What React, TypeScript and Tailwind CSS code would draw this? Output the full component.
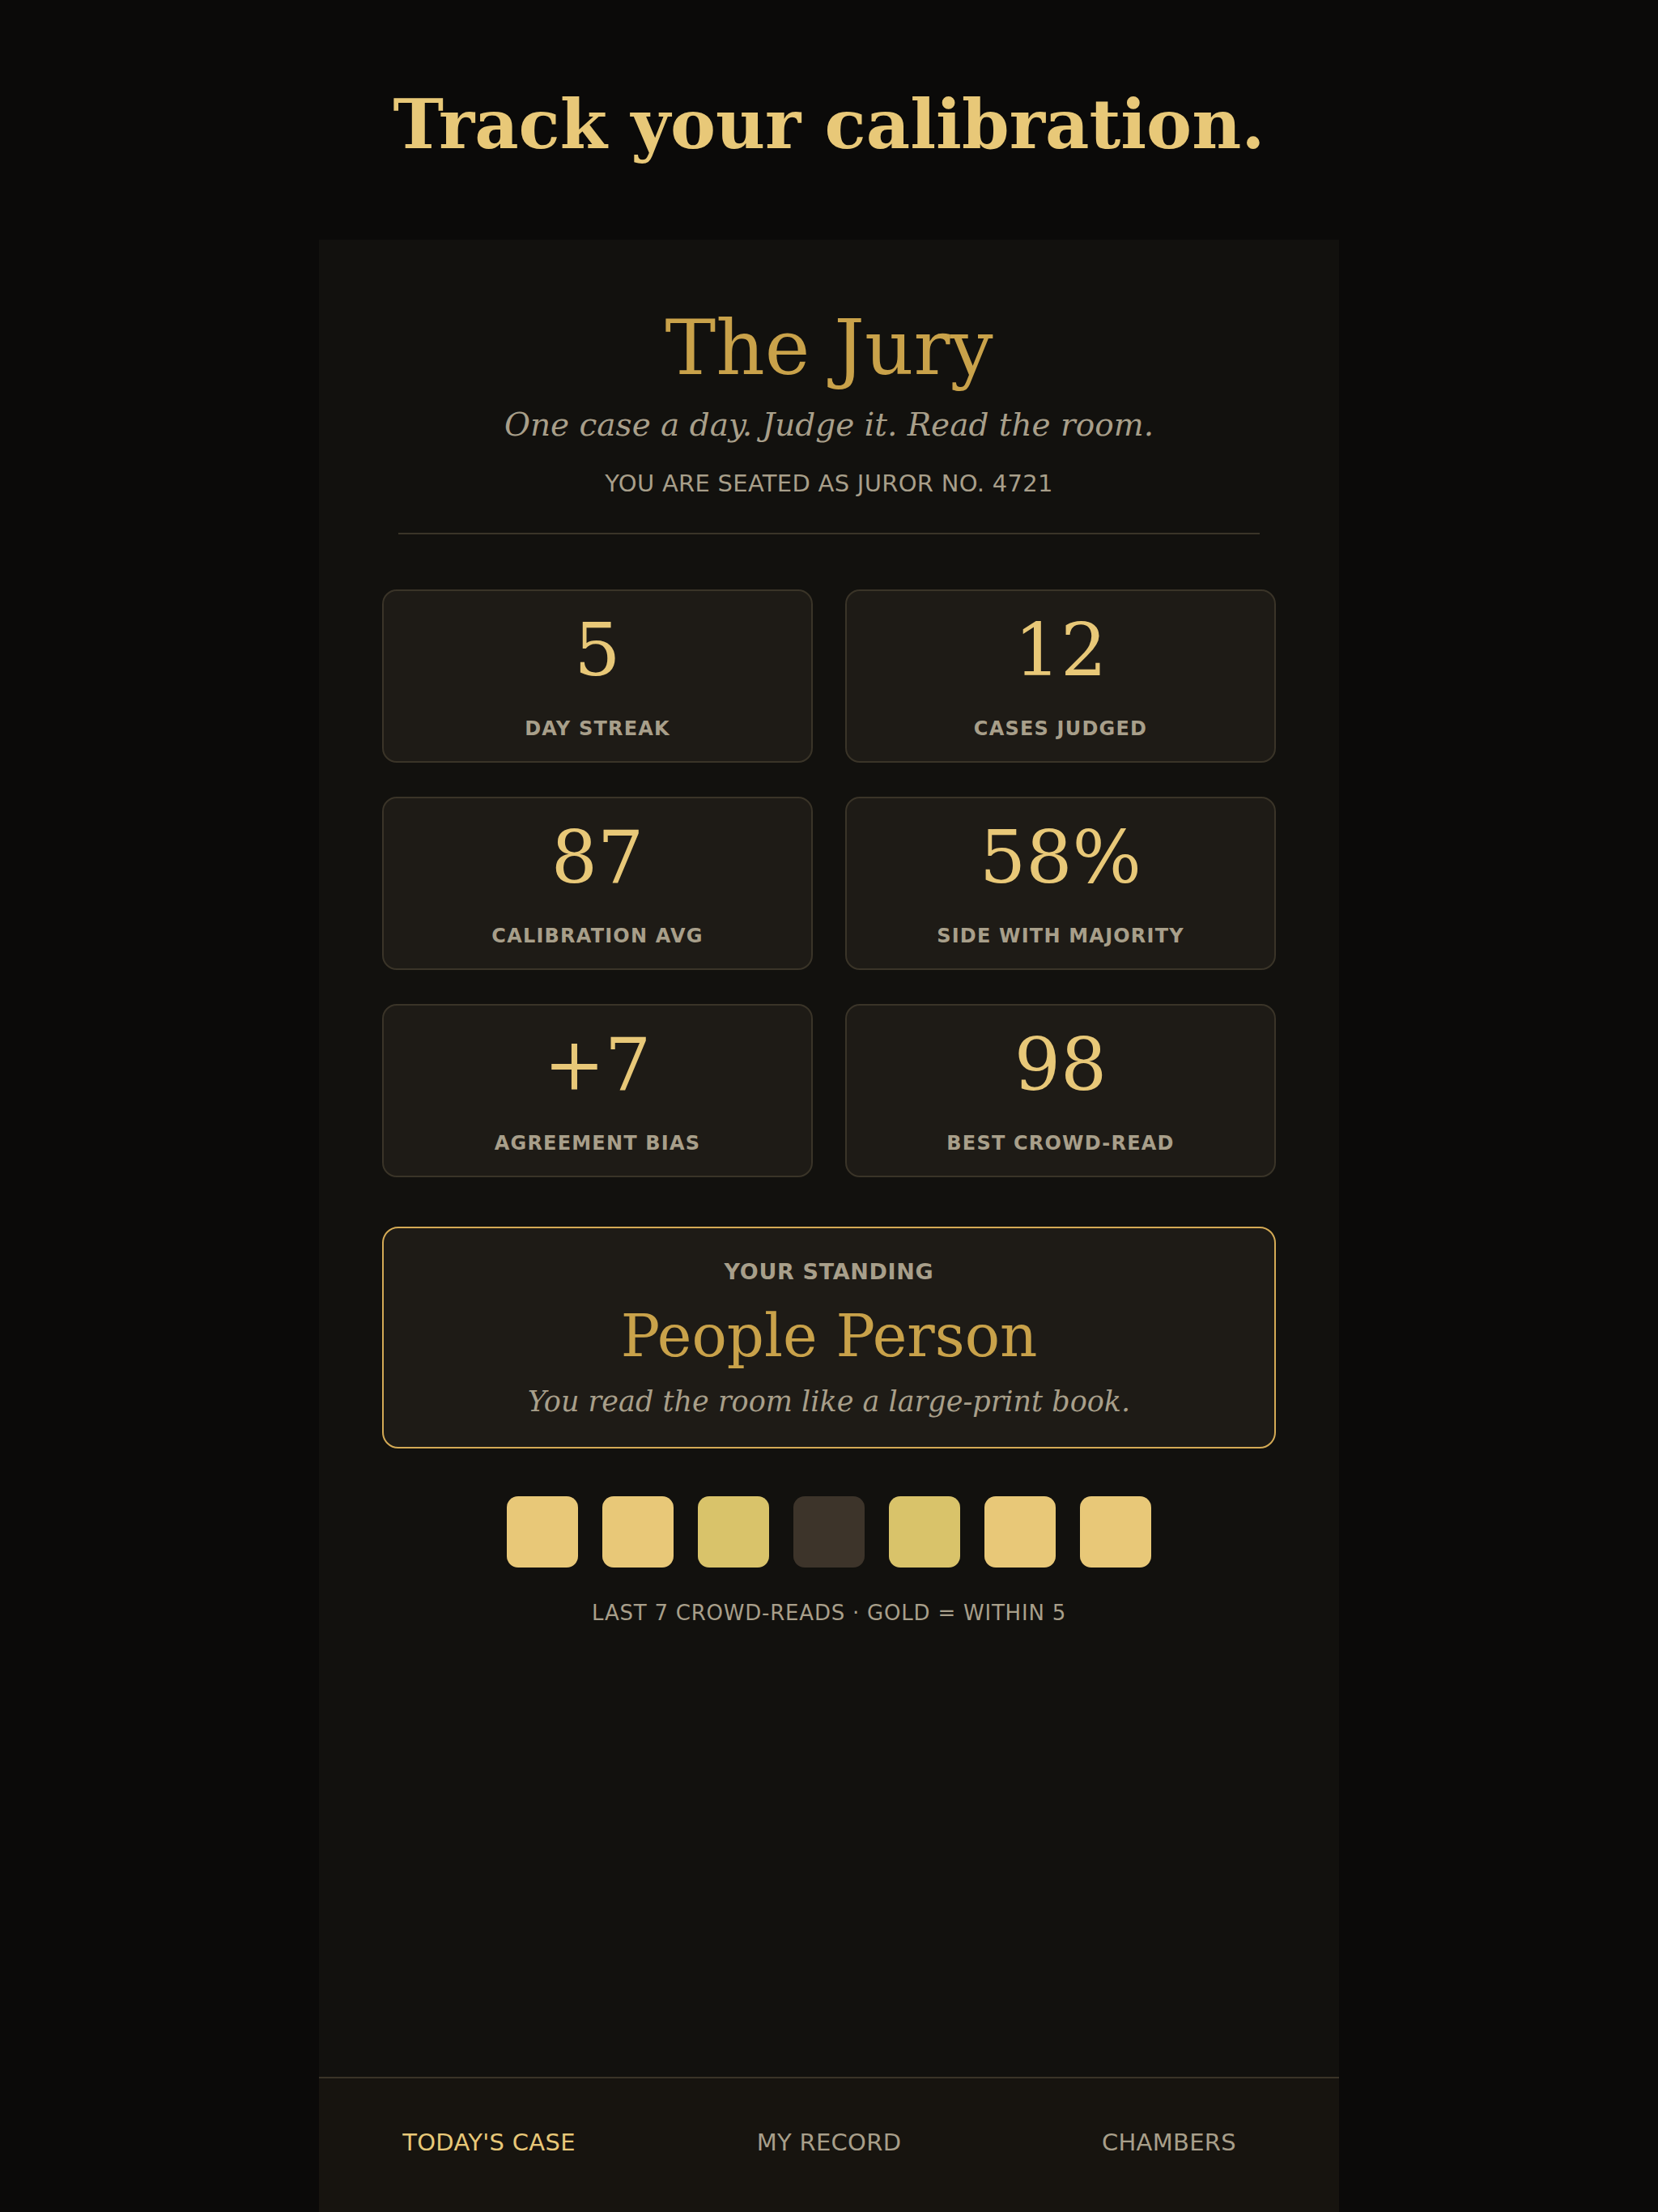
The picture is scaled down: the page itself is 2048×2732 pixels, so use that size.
import React from "react";

const serif = { fontFamily: '"DejaVu Serif", "Liberation Serif", serif' };

const stats = [
  { value: "5", label: "DAY STREAK" },
  { value: "12", label: "CASES JUDGED" },
  { value: "87", label: "CALIBRATION AVG" },
  { value: "58%", label: "SIDE WITH MAJORITY" },
  { value: "+7", label: "AGREEMENT BIAS" },
  { value: "98", label: "BEST CROWD-READ" },
];

const reads = ["#e8c878", "#e8c878", "#d9c36a", "#3d342a", "#d9c36a", "#e8c878", "#e8c878"];

export default function App() {
  return (
    <div className="min-h-screen bg-[#0b0a09] flex flex-col items-center font-['DejaVu_Sans','Liberation_Sans',sans-serif]">
      <h1
        className="pt-[112px] text-[84px] leading-none font-bold text-[#e8c878]"
        style={serif}
      >
        Track your calibration.
      </h1>

      <div className="mt-[100px] w-[1260px] h-[2436px] bg-[#12110e] flex flex-col">
        <div className="pt-[87px] flex flex-col items-center text-center">
          <div className="text-[94px] leading-none text-[#c9a24a]" style={serif}>
            The Jury
          </div>
          <div className="mt-[28px] text-[39px] leading-none italic text-[#a89f8a]" style={serif}>
            One case a day. Judge it. Read the room.
          </div>
          <div className="mt-[39px] text-[29px] leading-none text-[#a89f8a] tracking-[0.01em]">
            YOU ARE SEATED AS JUROR NO. 4721
          </div>
        </div>

        <div className="mt-[46px] mx-[98px] h-[2px] bg-[#3a3428]" />

        <div className="mt-[68px] px-[78px] grid grid-cols-2 gap-x-[40px] gap-y-[42px]">
          {stats.map((s) => (
            <StatCard key={s.label} value={s.value} label={s.label} />
          ))}
        </div>

        <div className="mt-[61px] mx-[78px] h-[274px] rounded-[20px] border-2 border-[#d4aa55] bg-[#1e1b16] flex flex-col items-center text-center pt-[40px]">
          <div className="text-[27px] leading-none font-bold tracking-[0.025em] text-[#a89f8a]">
            YOUR STANDING
          </div>
          <div className="mt-[30px] text-[72px] leading-none text-[#c9a24a]" style={serif}>
            People Person
          </div>
          <div className="mt-[28px] text-[35px] leading-none italic text-[#a89f8a]" style={serif}>
            You read the room like a large-print book.
          </div>
        </div>

        <div className="mt-[59px] flex justify-center gap-[30px]">
          {reads.map((c, i) => (
            <div key={i} className="w-[88px] h-[88px] rounded-[14px]" style={{ backgroundColor: c }} />
          ))}
        </div>

        <div className="mt-[43px] text-center text-[26px] leading-none tracking-[0.03em] text-[#a89f8a]">
          LAST 7 CROWD-READS · GOLD = WITHIN 5
        </div>

        <nav className="mt-auto h-[167px] pb-[6px] border-t-2 border-[#3a3428] bg-[#17140f] grid grid-cols-3 items-center text-center text-[29px] leading-none tracking-[0.01em]">
          <span className="text-[#e8c878]">TODAY'S CASE</span>
          <span className="text-[#a89f8a]">MY RECORD</span>
          <span className="text-[#a89f8a]">CHAMBERS</span>
        </nav>
      </div>
    </div>
  );
}

function StatCard({ value, label }: { value: string; label: string }) {
  return (
    <div className="h-[214px] rounded-[18px] border-2 border-[#3a3428] bg-[#1e1b16] flex flex-col items-center pt-[28px]">
      <div className="text-[90px] leading-none text-[#e8c878]" style={serif}>
        {value}
      </div>
      <div className="mt-[38px] text-[24px] leading-[1.2] font-bold tracking-[0.05em] text-[#a89f8a]">
        {label}
      </div>
    </div>
  );
}
